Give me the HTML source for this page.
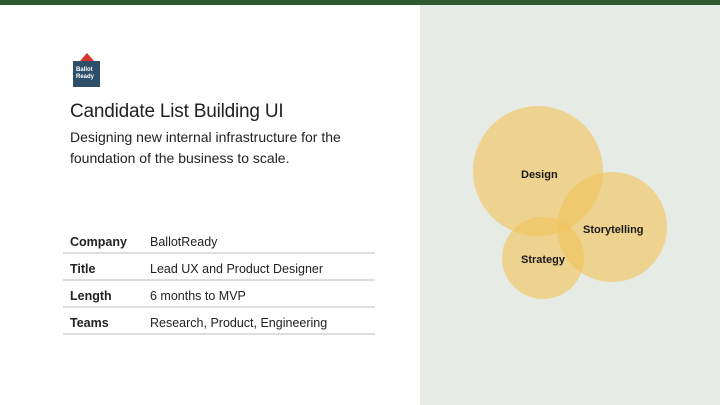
<!DOCTYPE html>
<html><head><meta charset="utf-8"><style>
*{margin:0;padding:0;box-sizing:border-box}
body{width:720px;height:405px;position:relative;overflow:hidden;background:#fff;font-family:"Liberation Sans",sans-serif;color:#222}
.top{position:absolute;left:0;top:0;width:720px;height:5px;background:#2f5a2f}
.right{position:absolute;left:420px;top:5px;width:300px;height:400px;background:#e6ece5}
.logo{position:absolute;left:73px;top:61px;width:27px;height:26px;background:#2d4f6a;color:#fff;font-size:6px;font-weight:bold;line-height:7px;padding:6px 0 0 3px}
.tri{position:absolute;left:80px;top:53px;width:0;height:0;border-left:7px solid transparent;border-right:7px solid transparent;border-bottom:8px solid #d9332b}
h1{position:absolute;left:70px;top:101px;font-size:19px;font-weight:normal;color:#222;letter-spacing:-0.2px}
.sub{position:absolute;left:70px;top:127px;font-size:14px;line-height:21px;color:#222}
.row{position:absolute;left:63px;width:312px;height:27px;border-bottom:2px solid #ddd;font-size:12.5px}
.row b{position:absolute;left:7px;top:8px;font-weight:bold}
.row span{position:absolute;left:87px;top:8px}
</style></head><body>
<div class="top"></div>
<div class="right"></div>
<div class="tri"></div>
<div class="logo">Ballot<br>Ready</div>
<h1>Candidate List Building UI</h1>
<div class="sub">Designing new internal infrastructure for the<br>foundation of the business to scale.</div>
<div class="row" style="top:227px"><b>Company</b><span>BallotReady</span></div>
<div class="row" style="top:254px"><b>Title</b><span>Lead UX and Product Designer</span></div>
<div class="row" style="top:281px"><b>Length</b><span>6 months to MVP</span></div>
<div class="row" style="top:308px"><b>Teams</b><span>Research, Product, Engineering</span></div>
<svg style="position:absolute;left:0;top:0" width="720" height="405">
<g fill="rgb(240,196,90)" fill-opacity="0.62">
<circle cx="538" cy="171" r="65"/>
<circle cx="612" cy="227" r="55"/>
<circle cx="543" cy="258" r="41"/>
</g>
<g font-family="Liberation Sans,sans-serif" font-size="11" font-weight="bold" fill="#1a1a1a">
<text x="521" y="178">Design</text>
<text x="583" y="233">Storytelling</text>
<text x="521" y="263">Strategy</text>
</g>
</svg>
</body></html>
